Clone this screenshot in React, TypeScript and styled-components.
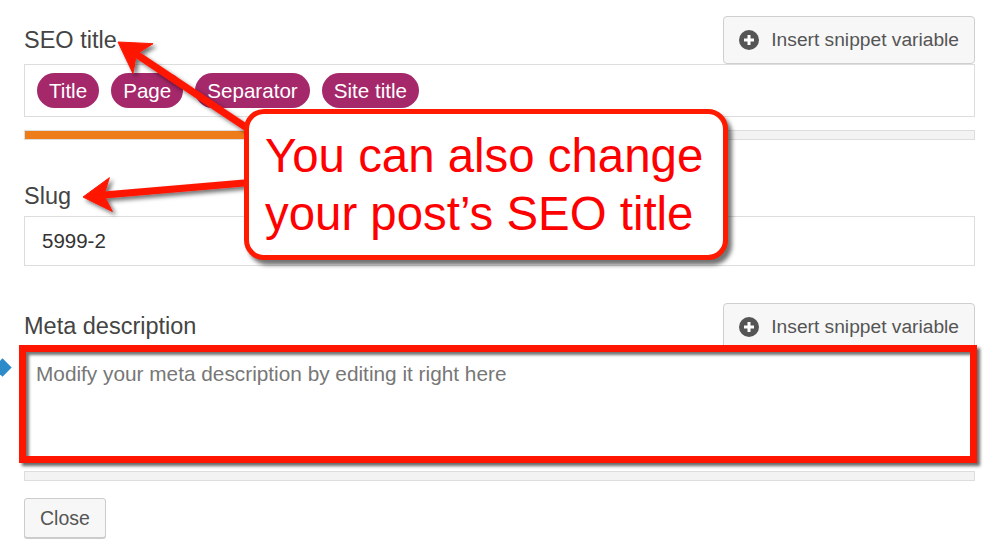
import * as React from "react";
import styled, { createGlobalStyle } from "styled-components";

const GlobalStyle = createGlobalStyle`
  html, body {
    margin: 0;
    padding: 0;
    background: #ffffff;
    overflow: hidden;
  }
  * {
    box-sizing: border-box;
  }
`;

const Page = styled.div`
  position: relative;
  width: 1000px;
  height: 551px;
  padding: 16px 25px 0 24px;
  font-family: "Liberation Sans", Arial, sans-serif;
  color: #444;
  overflow: hidden;
`;

const Field = styled.section<{ $gap?: number }>`
  display: flex;
  flex-direction: column;
  margin-top: ${p => p.$gap ?? 0}px;
`;

const FieldHeader = styled.div`
  display: flex;
  justify-content: space-between;
  align-items: flex-end;
  height: 48px;
`;

const Label = styled.label<{ $bottom?: number }>`
  font-size: 23.5px;
  line-height: 23.5px;
  color: #444;
  margin-bottom: ${p => p.$bottom ?? 0}px;
`;

const SnippetButton = styled.button`
  display: flex;
  align-items: center;
  gap: 12px;
  height: 48px;
  padding: 0 15px;
  background: #f7f7f7;
  border: 1px solid #cfcfcf;
  border-radius: 4px;
  font-family: "Liberation Sans", Arial, sans-serif;
  font-size: 19.2px;
  color: #555;
  cursor: pointer;
`;

const EditorBox = styled.div`
  display: flex;
  align-items: center;
  gap: 12px;
  height: 53px;
  padding: 0 12px;
  border: 1px solid #ddd;
  background: #fff;
`;

const Pill = styled.span`
  display: inline-flex;
  align-items: center;
  height: 35px;
  padding: 0 12px;
  border-radius: 18px;
  background: #a4286a;
  color: #fff;
  font-size: 20.6px;
`;

const Progress = styled.div<{ $fill: number; $gap: number }>`
  height: 10px;
  margin-top: ${p => p.$gap}px;
  border: 1px solid #ddd;
  background: #f3f3f3 linear-gradient(#ee7c1b, #ee7c1b) no-repeat;
  background-size: ${p => p.$fill}% 100%;
`;

const SlugInput = styled.div`
  display: flex;
  align-items: center;
  height: 50px;
  padding: 0 17px;
  border: 1px solid #ddd;
  font-size: 20.5px;
  color: #333;
`;

const TextareaWrap = styled.div`
  position: relative;
`;

const Textarea = styled.textarea`
  display: block;
  width: 100%;
  height: 107px;
  padding: 8px 11px;
  border: 1px solid #ddd;
  resize: none;
  font-family: "Liberation Sans", Arial, sans-serif;
  font-size: 20.8px;
  line-height: 1.3;
  color: #333;
  outline: none;
  &::placeholder {
    color: #777;
  }
`;

const Highlight = styled.div`
  position: absolute;
  left: -5px;
  top: -6px;
  right: -2px;
  bottom: -5px;
  border: 7px solid #ff1500;
  box-shadow: 3px 3px 3px rgba(0, 0, 0, 0.6), inset 3px 3px 3px rgba(0, 0, 0, 0.55);
  pointer-events: none;
`;

const Pointer = styled.div`
  position: absolute;
  left: -4px;
  top: 361px;
  width: 13px;
  height: 13px;
  background: #2e8bc9;
  transform: rotate(45deg);
`;

const CloseButton = styled.button`
  align-self: flex-start;
  height: 40px;
  margin-top: 17px;
  padding: 0 15px;
  background: #f7f7f7;
  border: 1px solid #ccc;
  border-radius: 3px;
  box-shadow: 0 1px 0 #ccc;
  font-family: "Liberation Sans", Arial, sans-serif;
  font-size: 19.5px;
  color: #555;
  cursor: pointer;
`;

const Arrows = styled.svg`
  position: absolute;
  left: 0;
  top: 0;
  overflow: visible;
  pointer-events: none;
`;

const Callout = styled.div`
  position: absolute;
  left: 244px;
  top: 109px;
  width: 484px;
  padding: 13px 16px 12px;
  border: 5px solid #ff1a00;
  border-radius: 20px;
  background: #fff;
  box-shadow: 4px 5px 4px rgba(0, 0, 0, 0.55);
  color: #ff0000;
  font-family: "Liberation Sans", Arial, sans-serif;
  font-size: 47.4px;
  line-height: 58px;
  white-space: nowrap;
`;

const PlusCircle = () => (
  <svg width="20" height="20" viewBox="0 0 20 20">
    <circle cx="10" cy="10" r="10" fill="#555" />
    <path d="M10 5v10M5 10h10" stroke="#fff" strokeWidth="3" />
  </svg>
);

const pills = ["Title", "Page", "Separator", "Site title"];

export default function App() {
  return (
    <Page>
      <GlobalStyle />

      <Field>
        <FieldHeader>
          <Label $bottom={11.5}>SEO title</Label>
          <SnippetButton>
            <PlusCircle />
            Insert snippet variable
          </SnippetButton>
        </FieldHeader>
        <EditorBox>
          {pills.map(p => (
            <Pill key={p}>{p}</Pill>
          ))}
        </EditorBox>
        <Progress $fill={40} $gap={13} />
      </Field>

      <Field $gap={45}>
        <Label $bottom={7.5}>Slug</Label>
        <SlugInput>5999-2</SlugInput>
      </Field>

      <Field $gap={37}>
        <FieldHeader>
          <Label $bottom={12.5}>Meta description</Label>
          <SnippetButton>
            <PlusCircle />
            Insert snippet variable
          </SnippetButton>
        </FieldHeader>
        <TextareaWrap>
          <Textarea placeholder="Modify your meta description by editing it right here" />
          <Highlight />
        </TextareaWrap>
        <Progress $fill={0} $gap={13} />
        <CloseButton>Close</CloseButton>
      </Field>

      <Pointer />

      <Arrows width="1000" height="300">
        <defs>
          <filter id="shade" x="-20%" y="-20%" width="140%" height="140%">
            <feDropShadow dx="3" dy="3" stdDeviation="2" floodColor="#000" floodOpacity="0.55" />
          </filter>
        </defs>
        <g filter="url(#shade)" fill="#ff1500" stroke="#ff1500">
          <line x1="136" y1="54" x2="250" y2="130" strokeWidth="7" />
          <polygon points="118,42 153,43.7 136.3,54.2 133,73.6" strokeWidth="1" />
          <line x1="104" y1="195" x2="250" y2="182.5" strokeWidth="7" />
          <polygon points="83,197 109.4,177.7 103.9,195.2 112.4,211.5" strokeWidth="1" />
        </g>
      </Arrows>

      <Callout>
        You can also change
        <br />
        your post’s SEO title
      </Callout>
    </Page>
  );
}
